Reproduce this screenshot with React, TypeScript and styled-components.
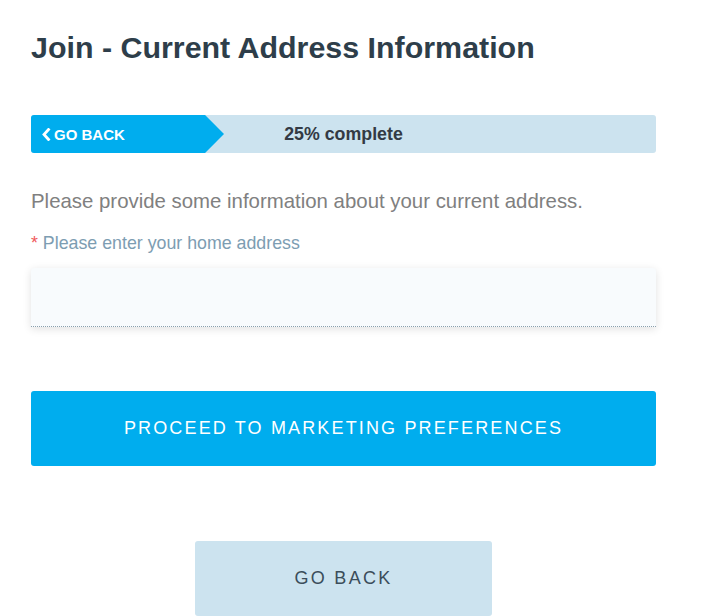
import React from "react";
import styled, { createGlobalStyle } from "styled-components";

const Global = createGlobalStyle`
  html, body { margin: 0; padding: 0; background: #fff; }
  body { font-family: "Liberation Sans", Arial, sans-serif; }
  * { box-sizing: border-box; }
`;

const Page = styled.div`
  width: 625px;
  margin-left: 31px;
  padding-top: 29px;
  display: flex;
  flex-direction: column;
`;

const Title = styled.h1`
  margin: 0;
  font-size: 30.4px;
  line-height: 36px;
  font-weight: 700;
  color: #2e3e4a;
`;

const Progress = styled.div`
  position: relative;
  margin-top: 50px;
  height: 38px;
  background: #cce3ef;
  border-radius: 3px;
  display: flex;
  align-items: center;
  justify-content: center;
`;

const BackTab = styled.button`
  position: absolute;
  left: 0;
  top: 0;
  height: 38px;
  width: 193px;
  border: 0;
  padding: 0 0 0 10px;
  background: #00adee;
  color: #fff;
  font-family: "Liberation Sans", Arial, sans-serif;
  font-weight: 700;
  font-size: 15px;
  display: flex;
  align-items: center;
  gap: 3px;
  border-radius: 3px 0 0 3px;
  clip-path: polygon(0 0, 90.2% 0, 100% 50%, 90.2% 100%, 0 100%);
  cursor: pointer;
`;

const ProgressText = styled.span`
  font-size: 17.8px;
  font-weight: 700;
  color: #333a44;
`;

const Intro = styled.p`
  margin: 35px 0 0;
  font-size: 20.4px;
  line-height: 26px;
  color: #808080;
`;

const Label = styled.label`
  margin-top: 18px;
  font-size: 17.8px;
  line-height: 22px;
  color: #7d9db2;
`;

const Star = styled.span`
  color: #f05a5a;
`;

const Input = styled.input`
  margin-top: 14px;
  height: 59px;
  width: 100%;
  border: 0;
  border-bottom: 1px dotted #8aa0ad;
  background: #f8fbfd;
  box-shadow: 0 2px 8px rgba(0, 0, 0, 0.12);
  border-radius: 3px 3px 0 0;
  outline: none;
  font-size: 16px;
  padding: 0 12px;
`;

const Primary = styled.button`
  margin-top: 64px;
  height: 75px;
  width: 100%;
  border: 0;
  border-radius: 3px;
  background: #00adee;
  color: #fff;
  font-family: "Liberation Sans", Arial, sans-serif;
  font-size: 18px;
  letter-spacing: 2.15px;
  text-transform: uppercase;
  cursor: pointer;
`;

const Secondary = styled.button`
  margin: 75px auto 0;
  height: 75px;
  width: 297px;
  border: 0;
  border-radius: 3px;
  background: #cce3ef;
  color: #3b4d5a;
  font-family: "Liberation Sans", Arial, sans-serif;
  font-size: 18px;
  letter-spacing: 2.3px;
  text-transform: uppercase;
  cursor: pointer;
`;

const Chevron = () => (
  <svg width="10" height="13" viewBox="0 0 10 13" aria-hidden>
    <path d="M7.5 1.5 L3 6.5 L7.5 11.5" fill="none" stroke="#fff" strokeWidth="2.8" strokeLinecap="square" />
  </svg>
);

export default function App() {
  return (
    <>
      <Global />
      <Page>
        <Title>Join - Current Address Information</Title>
        <Progress>
          <BackTab>
            <Chevron />
            GO BACK
          </BackTab>
          <ProgressText>25% complete</ProgressText>
        </Progress>
        <Intro>Please provide some information about your current address.</Intro>
        <Label>
          <Star>*</Star> Please enter your home address
        </Label>
        <Input type="text" />
        <Primary>Proceed to Marketing Preferences</Primary>
        <Secondary>Go Back</Secondary>
      </Page>
    </>
  );
}
